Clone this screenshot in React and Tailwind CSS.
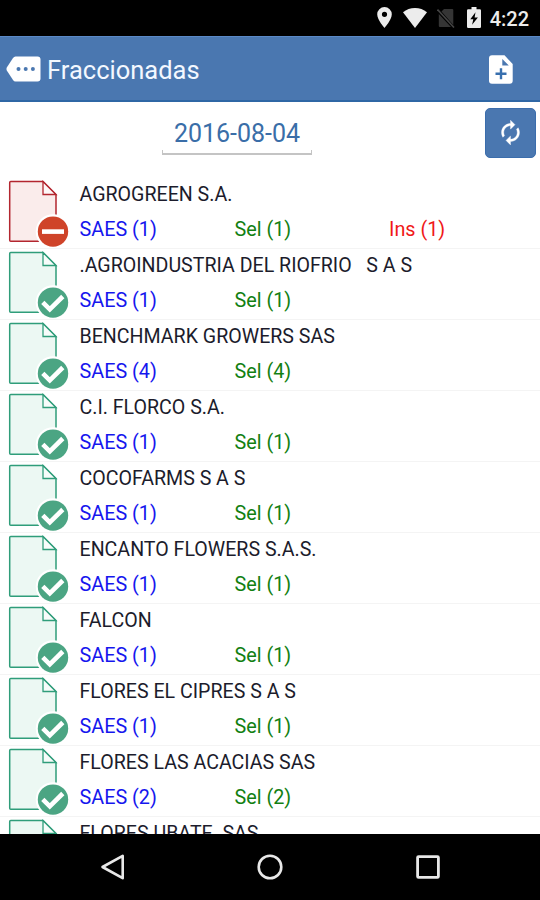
import React from 'react';

const rows = [
    { name: 'AGROGREEN S.A.', saes: 1, sel: 1, ins: 1 },
    { name: '.AGROINDUSTRIA DEL RIOFRIO   S A S', saes: 1, sel: 1 },
    { name: 'BENCHMARK GROWERS SAS', saes: 4, sel: 4 },
    { name: 'C.I. FLORCO S.A.', saes: 1, sel: 1 },
    { name: 'COCOFARMS S A S', saes: 1, sel: 1 },
    { name: 'ENCANTO FLOWERS S.A.S.', saes: 1, sel: 1 },
    { name: 'FALCON', saes: 1, sel: 1 },
    { name: 'FLORES EL CIPRES S A S', saes: 1, sel: 1 },
    { name: 'FLORES LAS ACACIAS SAS', saes: 2, sel: 2 },
    { name: 'FLORES UBATE  SAS' },
];

function StatusBar() {
    return (
        <div className="h-[35.5px] shrink-0 bg-black flex justify-end items-center pr-[11px] text-[#ececec]">
            {/* location */}
            <svg className="w-[15px] h-[21px] mr-[10.5px]" viewBox="0 0 15 21" fill="currentColor">
                <path fillRule="evenodd" d="M7.5 0A7.3 7.3 0 0 0 .2 7.3C.2 12.7 7.5 21 7.5 21s7.3-8.3 7.3-13.7A7.3 7.3 0 0 0 7.5 0Zm0 4.7a2.6 2.6 0 1 1 0 5.2 2.6 2.6 0 0 1 0-5.2Z" />
            </svg>
            {/* wifi */}
            <svg className="w-6 h-5 mr-[10px]" viewBox="0 0 24 20" fill="currentColor">
                <path d="M12 20 0 4.2C3.4 1.5 7.5 0 12 0s8.6 1.5 12 4.2Z" />
            </svg>
            {/* no sim */}
            <svg className="w-[18px] h-5 mr-[12px]" viewBox="0 0 18 20">
                <path d="M7 1h8.2q1.1 0 1.1 1.1V17L4.5 3.5ZM1.8 6 14 19H2.9q-1.1 0-1.1-1.1Z" fill="#353535" />
                <path d="m.5 1.5 16.5 18" stroke="#444" strokeWidth="1.6" />
            </svg>
            {/* charging battery */}
            <svg className="w-[14px] h-[21px] mr-[9px]" viewBox="0 0 14 21" fill="currentColor">
                <path fillRule="evenodd" d="M4.5 0h5v2.2h3.3q1.2 0 1.2 1.2v16.4q0 1.2-1.2 1.2H1.2Q0 21 0 19.8V3.4q0-1.2 1.2-1.2h3.3ZM8.5 5.2 3.3 12.2h3l-1.2 5.6 5.8-7.3H7.6Z" />
            </svg>
            <span className="text-[20px] leading-none font-medium pt-[2px]">4:22</span>
        </div>
    );
}

function Header() {
    return (
        <header className="h-[66.5px] shrink-0 bg-[#4a77b0] border-t border-t-[#5b89c6] border-b-2 border-b-[#2f67a5] flex items-center pt-[2px] pl-[6px] pr-[27.5px]">
            <svg className="w-[35px] h-[26px]" viewBox="0 0 35 26">
                <path d="M9.5.5H31.5Q34.5.5 34.5 3.5V22.5Q34.5 25.5 31.5 25.5H9.5Q8 25.5 7 24L.8 14.5Q0 13 .8 11.5L7 2Q8 .5 9.5.5Z" fill="#fff" />
                <circle cx="12.5" cy="13" r="2" fill="#4a77b0" />
                <circle cx="19.7" cy="13" r="2" fill="#4a77b0" />
                <circle cx="26.9" cy="13" r="2" fill="#4a77b0" />
            </svg>
            <h1 className="ml-[6px] flex-1 text-[25.5px] leading-none text-[#f3f8ff] pt-[3px]">Fraccionadas</h1>
            <svg className="w-6 h-[29px]" viewBox="0 0 24 29">
                <path fillRule="evenodd" d="M3 .3h12.5L23.7 9v16.7q0 3-3 3H3q-3 0-3-3V3.3q0-3 3-3ZM13.3 4v6.5h6.5Z" fill="#fff" />
                <path d="M12 13.2v11M6.5 18.7h11" stroke="#386fae" strokeWidth="2.4" />
            </svg>
        </header>
    );
}

function DateBar() {
    return (
        <div className="h-[76px] shrink-0 flex justify-between pl-[162px] pr-[4.5px] pt-[5.5px]">
            <div className="w-[150px] h-[47px] relative text-center text-[25px] leading-[52px] text-[#3a6ea8]">
                2016-08-04
                <span className="absolute left-0 right-0 bottom-0 h-[5px] border border-t-0 border-b-2 border-[#c4c4c4]" />
            </div>
            <button className="w-[50.5px] h-[50px] rounded-[5px] bg-[#4a77b0] border border-[#3b6dac] flex items-center justify-center">
                <svg className="w-[27px] h-[27px]" viewBox="0 0 24 24" fill="#fff" stroke="#fff" strokeWidth="0.3">
                    <path d="M12 6v3l4-4-4-4v3c-4.42 0-8 3.58-8 8 0 1.57.46 3.03 1.24 4.26L6.7 14.8A5.87 5.87 0 0 1 6 12c0-3.31 2.69-6 6-6zm6.76 1.74L17.3 9.2c.44.84.7 1.79.7 2.8 0 3.31-2.69 6-6 6v-3l-4 4 4 4v-3c4.42 0 8-3.58 8-8 0-1.57-.46-3.03-1.24-4.26z" />
                </svg>
            </button>
        </div>
    );
}

function DocIcon({ rejected }) {
    const stroke = rejected ? '#b3262f' : '#2f9d7a';
    const fill = rejected ? '#faeceb' : '#ecf8f3';
    return (
        <svg className="w-[62px] h-[70px] ml-[8px] shrink-0" viewBox="8 178 62 70">
            <path d="M10.7 181.5H43L56 194.5V241.3H10.7Q9.7 241.3 9.7 240.3V182.5Q9.7 181.5 10.7 181.5Z" fill={fill} stroke={stroke} strokeWidth="1.5" />
            <path d="M43 181.5V194.5H56Z" fill="#fff" fillOpacity="0.6" stroke={stroke} strokeWidth="1.3" />
            <circle cx="53" cy="231.6" r="17.3" fill="#fff" />
            <circle cx="53" cy="231.6" r="15.2" fill={rejected ? '#cf4329' : '#4ba583'} />
            {rejected
                ? <path d="M42 231.6H64" stroke="#fff" strokeWidth="4.6" />
                : <path d="m42.8 231.3 7 7 13-12.8" fill="none" stroke="#fff" strokeWidth="4.6" />}
        </svg>
    );
}

function Row({ name, saes, sel, ins }) {
    return (
        <li className="h-[71.05px] shrink-0 flex border-b border-[#f4f4f4] text-[19.8px]">
            <DocIcon rejected={Boolean(ins)} />
            <div className="flex-1 pl-[9.5px] pt-[5px]">
                <div className="h-[24px] leading-[24px] whitespace-pre text-[19.6px] text-[#1c1c2c]">{name}</div>
                <div className="flex mt-[11px] h-[24px] leading-[24px]">
                    {saes && <span className="w-[155px] text-[#1616ee]">SAES ({saes})</span>}
                    {sel && <span className="w-[154.5px] text-[#128012]">Sel ({sel})</span>}
                    {ins && <span className="text-[#f01818]">Ins ({ins})</span>}
                </div>
            </div>
        </li>
    );
}

function NavBar() {
    return (
        <nav className="h-[66.5px] shrink-0 bg-black flex items-center justify-between pl-[100px] pr-[100.5px]">
            <svg className="w-[25px] h-[28px]" viewBox="0 0 25 28">
                <path d="M2.5 14 22.7 2.8V25.2Z" fill="none" stroke="#e8e8e8" strokeWidth="2.6" strokeLinejoin="round" />
            </svg>
            <svg className="w-[28px] h-[28px]" viewBox="0 0 28 28">
                <circle cx="14" cy="14" r="11.3" fill="none" stroke="#e8e8e8" strokeWidth="2.6" />
            </svg>
            <svg className="w-[24px] h-[24px]" viewBox="0 0 24 24">
                <rect x="1.6" y="1.6" width="20.8" height="20.8" rx="1" fill="none" stroke="#e8e8e8" strokeWidth="2.8" />
            </svg>
        </nav>
    );
}

export default function App() {
    return (
        <div className="w-[540px] h-[900px] bg-white flex flex-col overflow-hidden font-['Roboto',sans-serif]">
            <StatusBar />
            <Header />
            <DateBar />
            <ul className="flex-1 min-h-0 overflow-hidden flex flex-col">
                {rows.map((row) => <Row key={row.name} {...row} />)}
            </ul>
            <NavBar />
        </div>
    );
}
